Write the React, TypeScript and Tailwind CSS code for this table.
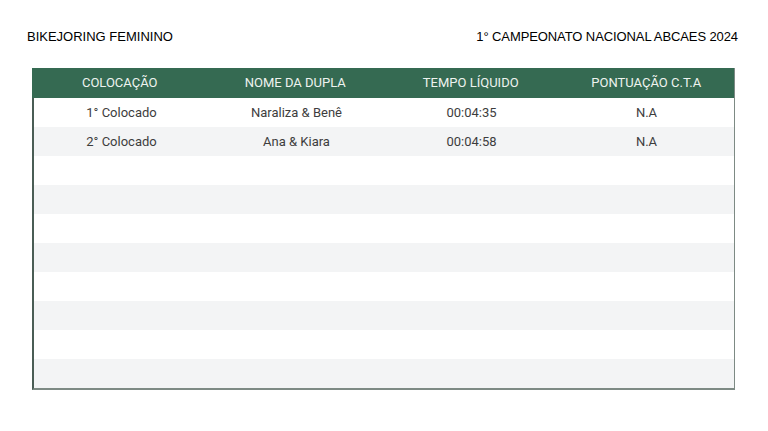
import React from "react";

const rows: [string, string, string, string][] = [
  ["1° Colocado", "Naraliza & Benê", "00:04:35", "N.A"],
  ["2° Colocado", "Ana & Kiara", "00:04:58", "N.A"],
  ["", "", "", ""],
  ["", "", "", ""],
  ["", "", "", ""],
  ["", "", "", ""],
  ["", "", "", ""],
  ["", "", "", ""],
  ["", "", "", ""],
  ["", "", "", ""],
];

export default function App() {
  return (
    <div className="w-[768px] h-[431px] bg-white overflow-hidden">
      <div className="flex justify-between items-center pl-[27px] pr-[30px] pt-[23px] h-[50px] text-[13px] text-black font-['Liberation_Sans',Arial,sans-serif]">
        <span>BIKEJORING FEMININO</span>
        <span className="tracking-[-0.1px]">1° CAMPEONATO NACIONAL ABCAES 2024</span>
      </div>
      <div className="ml-[32px] mt-[18px] w-[703px] border-l-2 border-b-2 border-r-[1.5px] border-l-[#4a5d55] border-b-[#7d8a84] border-r-[#7d8a84] font-['Roboto',sans-serif] text-[13px]">
        <div className="grid grid-cols-4 h-[30px] items-center bg-[#356a52] text-[#eef3ef] text-center -ml-[2px]">
          <span>COLOCAÇÃO</span>
          <span>NOME DA DUPLA</span>
          <span>TEMPO LÍQUIDO</span>
          <span>PONTUAÇÃO C.T.A</span>
        </div>
        {rows.map((r, i) => (
          <div
            key={i}
            className={`grid grid-cols-4 h-[29px] items-center text-center text-[#3d3d3d] ${i % 2 === 1 ? "bg-[#f3f4f5]" : "bg-white"}`}
          >
            {r.map((c, j) => (
              <span key={j}>{c}</span>
            ))}
          </div>
        ))}
      </div>
    </div>
  );
}
